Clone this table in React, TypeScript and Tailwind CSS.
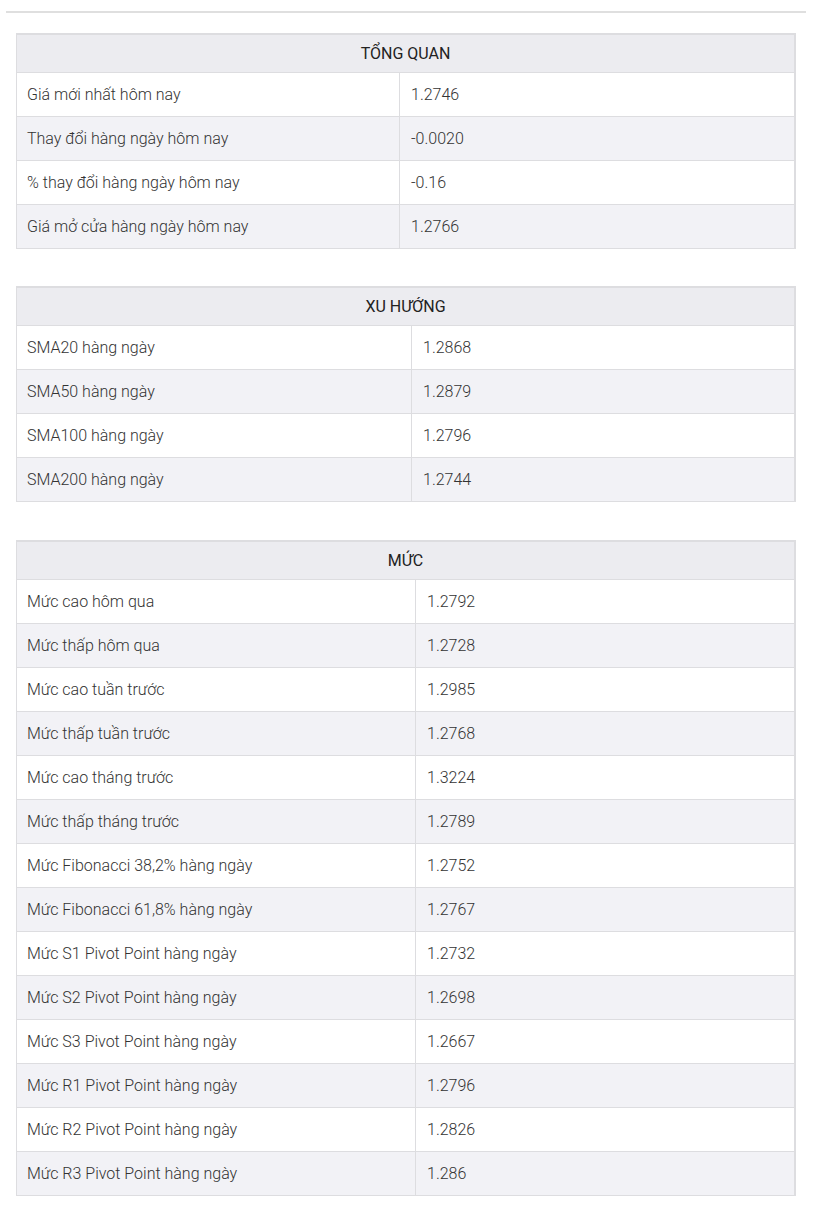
import React from 'react';

type Row = [string, string];

interface Section {
  title: string;
  labelWidth: string;
  rows: Row[];
}

const sections: Section[] = [
  {
    title: 'TỔNG QUAN',
    labelWidth: 'w-[383px]',
    rows: [
      ['Giá mới nhất hôm nay', '1.2746'],
      ['Thay đổi hàng ngày hôm nay', '-0.0020'],
      ['% thay đổi hàng ngày hôm nay', '-0.16'],
      ['Giá mở cửa hàng ngày hôm nay', '1.2766'],
    ],
  },
  {
    title: 'XU HƯỚNG',
    labelWidth: 'w-[395px]',
    rows: [
      ['SMA20 hàng ngày', '1.2868'],
      ['SMA50 hàng ngày', '1.2879'],
      ['SMA100 hàng ngày', '1.2796'],
      ['SMA200 hàng ngày', '1.2744'],
    ],
  },
  {
    title: 'MỨC',
    labelWidth: 'w-[399px]',
    rows: [
      ['Mức cao hôm qua', '1.2792'],
      ['Mức thấp hôm qua', '1.2728'],
      ['Mức cao tuần trước', '1.2985'],
      ['Mức thấp tuần trước', '1.2768'],
      ['Mức cao tháng trước', '1.3224'],
      ['Mức thấp tháng trước', '1.2789'],
      ['Mức Fibonacci 38,2% hàng ngày', '1.2752'],
      ['Mức Fibonacci 61,8% hàng ngày', '1.2767'],
      ['Mức S1 Pivot Point hàng ngày', '1.2732'],
      ['Mức S2 Pivot Point hàng ngày', '1.2698'],
      ['Mức S3 Pivot Point hàng ngày', '1.2667'],
      ['Mức R1 Pivot Point hàng ngày', '1.2796'],
      ['Mức R2 Pivot Point hàng ngày', '1.2826'],
      ['Mức R3 Pivot Point hàng ngày', '1.286'],
    ],
  },
];

const DataTable = ({ section }: { section: Section }) => {
  return (
    <div className="border border-[#dddde0] border-r-2">
      {/* Header */}
      <div className="h-[38px] bg-[#ececf0] border-t border-[#dddde0] flex items-center justify-center text-[#222] font-normal">
        {section.title}
      </div>
      {section.rows.map(([label, value], i) => (
        <div
          key={label}
          className={`flex h-[44px] border-t border-[#dddde0] ${i % 2 === 1 ? 'bg-[#f2f2f6]' : 'bg-white'}`}
        >
          <div className={`${section.labelWidth} shrink-0 flex items-center pl-[10px] border-r border-[#dddde0]`}>
            {label}
          </div>
          <div className="flex-1 flex items-center pl-[11px]">{value}</div>
        </div>
      ))}
    </div>
  );
};

export default function App() {
  return (
    <div
      className="bg-white min-h-[1207px] pt-[11px] text-[16px] font-light text-[#333] leading-none"
      style={{ fontFamily: 'Roboto, "Noto Sans", sans-serif' }}
    >
      <div className="ml-[6px] w-[800px] border-t-2 border-[#dfdfdf] pt-[20px] px-[10px] flex flex-col gap-[37px]">
        {sections.map((s, idx) => (
          <div key={s.title} className={idx === 2 ? 'mt-[1px]' : ''}>
            <DataTable section={s} />
          </div>
        ))}
      </div>
    </div>
  );
}
